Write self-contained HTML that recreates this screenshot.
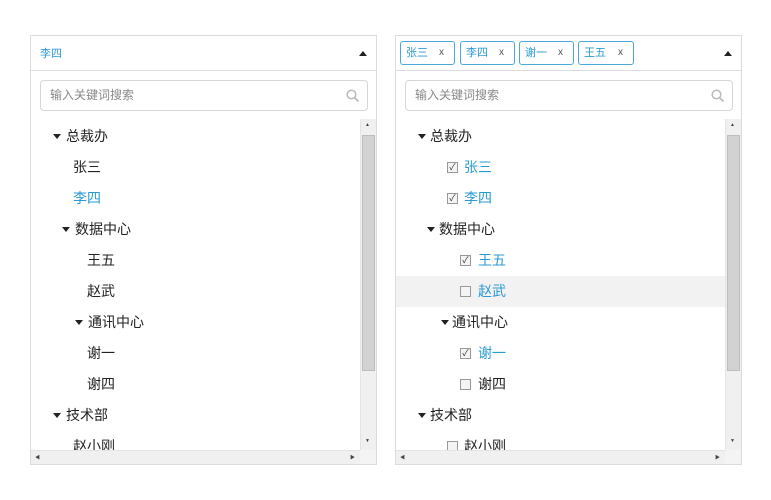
<!DOCTYPE html>
<html><head><meta charset="utf-8"><style>
*{margin:0;padding:0;box-sizing:border-box}
body{width:771px;height:500px;background:#fff;position:relative;overflow:hidden;font-family:"Liberation Sans","Noto Sans CJK SC",sans-serif;color:#222}
.panel{position:absolute;top:35px;width:347px;height:430px;border:1px solid #dcdcdc;background:#fff}
.hdr{position:absolute;left:0;top:0;right:0;height:35px;border-bottom:1px solid #dcdcdc}
.up{position:absolute;right:9px;top:15px;width:0;height:0;border-left:4px solid transparent;border-right:4px solid transparent;border-bottom:5px solid #222}
.search{position:absolute;left:9px;top:44px;width:328px;height:31px;border:1px solid #d6d6d6;border-radius:4px;font-size:12px;color:#888;line-height:29px;padding-left:9px}
.search svg{position:absolute;right:7px;top:8px}
.list{position:absolute;left:0;top:83px;width:331px;height:333px;overflow:hidden}
.row{position:absolute;left:0;width:331px;height:31px;line-height:31px;font-size:14px;white-space:nowrap}
.row span{position:absolute;top:0}
.tri{position:absolute;top:13px;width:0;height:0;border-left:4px solid transparent;border-right:4px solid transparent;border-top:5px solid #222}
.blue{color:#2a9ad6}
.cb{position:absolute;top:10px;width:11px;height:11px;border:1px solid #999;background:#f4f4f4;font-size:9px;line-height:9px;text-align:center;color:#333}
.vs{position:absolute;right:0;top:83px;width:16px;height:333px;background:#f0f0f0;border-left:1px solid #e4e4e4}
.thumb{position:absolute;left:1px;top:16px;width:13px;height:236px;background:#d2d2d2;border:1px solid #bdbdbd}
.hs{position:absolute;left:0;bottom:0;width:330px;height:14px;background:#f0f0f0;border-top:1px solid #e4e4e4}
.corner{position:absolute;right:0;bottom:0;width:16px;height:14px;background:#f4f4f4}
.tag{position:absolute;top:5px;height:24px;border:1px solid #4aa8dc;border-radius:3px;font-size:11px;line-height:22px;color:#2a9ad6;padding-left:5px}
.tag i{font-style:normal;position:absolute;right:10px;top:0;font-size:10px;color:#555}
.sm{font-size:5px;color:#444;position:absolute}
</style></head><body>

<div class="panel" style="left:30px">
 <div class="hdr"><span style="position:absolute;left:9px;top:9px;font-size:11px;color:#2a9ad6">李四</span><div class="up"></div></div>
 <div class="search">输入关键词搜索<svg width="14" height="14" viewBox="0 0 14 14"><circle cx="5.5" cy="5.5" r="4.3" fill="none" stroke="#bbb" stroke-width="1.5"/><path d="M8.7 8.7L12.5 12.5" stroke="#bbb" stroke-width="1.8"/></svg></div>
 <div class="list">
  <div class="row" style="top:2px"><div class="tri" style="left:22px"></div><span style="left:35px">总裁办</span></div>
  <div class="row" style="top:33px"><span style="left:42px">张三</span></div>
  <div class="row" style="top:64px"><span class="blue" style="left:42px">李四</span></div>
  <div class="row" style="top:95px"><div class="tri" style="left:31px"></div><span style="left:44px">数据中心</span></div>
  <div class="row" style="top:126px"><span style="left:56px">王五</span></div>
  <div class="row" style="top:157px"><span style="left:56px">赵武</span></div>
  <div class="row" style="top:188px"><div class="tri" style="left:44px"></div><span style="left:57px">通讯中心</span></div>
  <div class="row" style="top:219px"><span style="left:56px">谢一</span></div>
  <div class="row" style="top:250px"><span style="left:56px">谢四</span></div>
  <div class="row" style="top:281px"><div class="tri" style="left:22px"></div><span style="left:35px">技术部</span></div>
  <div class="row" style="top:312px"><span style="left:42px">赵小刚</span></div>
 </div>
 <div class="vs"><span class="sm" style="left:4px;top:3px">▲</span><div class="thumb"></div><span class="sm" style="left:4px;top:319px">▼</span></div>
 <div class="hs"><span class="sm" style="left:4px;top:3px">◀</span><span class="sm" style="left:319px;top:3px">▶</span></div>
 <div class="corner"></div>
</div>

<div class="panel" style="left:395px">
 <div class="hdr">
  <div class="tag" style="left:4px;width:55px">张三<i>x</i></div>
  <div class="tag" style="left:64px;width:55px">李四<i>x</i></div>
  <div class="tag" style="left:123px;width:55px">谢一<i>x</i></div>
  <div class="tag" style="left:182px;width:56px">王五<i>x</i></div>
  <div class="up"></div></div>
 <div class="search">输入关键词搜索<svg width="14" height="14" viewBox="0 0 14 14"><circle cx="5.5" cy="5.5" r="4.3" fill="none" stroke="#bbb" stroke-width="1.5"/><path d="M8.7 8.7L12.5 12.5" stroke="#bbb" stroke-width="1.8"/></svg></div>
 <div class="list">
  <div class="row" style="top:157px;background:#f2f2f2"></div>
  <div class="row" style="top:2px"><div class="tri" style="left:22px"></div><span style="left:34px">总裁办</span></div>
  <div class="row" style="top:33px"><div class="cb" style="left:51px">✓</div><span class="blue" style="left:68px">张三</span></div>
  <div class="row" style="top:64px"><div class="cb" style="left:51px">✓</div><span class="blue" style="left:68px">李四</span></div>
  <div class="row" style="top:95px"><div class="tri" style="left:31px"></div><span style="left:43px">数据中心</span></div>
  <div class="row" style="top:126px"><div class="cb" style="left:64px">✓</div><span class="blue" style="left:82px">王五</span></div>
  <div class="row" style="top:157px"><div class="cb" style="left:64px"></div><span class="blue" style="left:82px">赵武</span></div>
  <div class="row" style="top:188px"><div class="tri" style="left:45px"></div><span style="left:56px">通讯中心</span></div>
  <div class="row" style="top:219px"><div class="cb" style="left:64px">✓</div><span class="blue" style="left:82px">谢一</span></div>
  <div class="row" style="top:250px"><div class="cb" style="left:64px"></div><span style="left:82px">谢四</span></div>
  <div class="row" style="top:281px"><div class="tri" style="left:22px"></div><span style="left:34px">技术部</span></div>
  <div class="row" style="top:312px"><div class="cb" style="left:51px"></div><span style="left:68px">赵小刚</span></div>
 </div>
 <div class="vs"><span class="sm" style="left:4px;top:3px">▲</span><div class="thumb"></div><span class="sm" style="left:4px;top:319px">▼</span></div>
 <div class="hs"><span class="sm" style="left:4px;top:3px">◀</span><span class="sm" style="left:319px;top:3px">▶</span></div>
 <div class="corner"></div>
</div>
</body></html>
